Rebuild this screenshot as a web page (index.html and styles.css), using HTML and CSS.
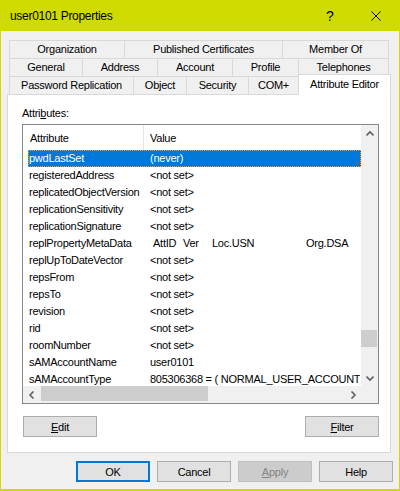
FILE: index.html
```html
<!DOCTYPE html>
<html lang="en">
<head>
  <meta charset="UTF-8">
  <title>user0101 Properties</title>
  <link rel="stylesheet" href="styles.css">
</head>
<body>
  <div class="window">
    <div class="titlebar">
      <span class="title">user0101 Properties</span>
      <span class="cap-btn help">?</span>
      <span class="cap-btn close">
        <svg width="10" height="10" viewBox="0 0 10 10"><path d="M0.5 0.5 L9.5 9.5 M9.5 0.5 L0.5 9.5" stroke="#000" stroke-width="1" fill="none"/></svg>
      </span>
    </div>

    <div class="content">
      <div class="tabs">
        <div class="tab-row">
          <div class="tab" style="width:116px">Organization</div>
          <div class="tab" style="width:159px">Published Certificates</div>
          <div class="tab" style="width:107px">Member Of</div>
        </div>
        <div class="tab-row">
          <div class="tab" style="width:74px">General</div>
          <div class="tab" style="width:76px">Address</div>
          <div class="tab" style="width:76px">Account</div>
          <div class="tab" style="width:67px">Profile</div>
          <div class="tab" style="width:91px">Telephones</div>
        </div>
        <div class="tab-row">
          <div class="tab" style="width:125px">Password Replication</div>
          <div class="tab" style="width:54px">Object</div>
          <div class="tab" style="width:63px">Security</div>
          <div class="tab" style="width:51px">COM+</div>
          <div class="tab active" style="width:93px">Attribute Editor</div>
        </div>
      </div>

      <div class="panel">
        <div class="label">Attri<u>b</u>utes:</div>

        <div class="listbox">
          <div class="list-main">
            <div class="viewport">
              <div class="list-header">
                <div class="col-name">Attribute</div>
                <div class="col-divider"></div>
                <div class="col-value">Value</div>
              </div>
              <div class="row selected"><span class="name">pwdLastSet</span><span class="value">(never)</span></div>
              <div class="row"><span class="name">registeredAddress</span><span class="value">&lt;not set&gt;</span></div>
              <div class="row"><span class="name">replicatedObjectVersion</span><span class="value">&lt;not set&gt;</span></div>
              <div class="row"><span class="name">replicationSensitivity</span><span class="value">&lt;not set&gt;</span></div>
              <div class="row"><span class="name">replicationSignature</span><span class="value">&lt;not set&gt;</span></div>
              <div class="row"><span class="name">replPropertyMetaData</span><span class="value meta"><span class="m1">AttID</span><span class="m2">Ver</span><span class="m3">Loc.USN</span><span>Org.DSA</span></span></div>
              <div class="row"><span class="name">replUpToDateVector</span><span class="value">&lt;not set&gt;</span></div>
              <div class="row"><span class="name">repsFrom</span><span class="value">&lt;not set&gt;</span></div>
              <div class="row"><span class="name">repsTo</span><span class="value">&lt;not set&gt;</span></div>
              <div class="row"><span class="name">revision</span><span class="value">&lt;not set&gt;</span></div>
              <div class="row"><span class="name">rid</span><span class="value">&lt;not set&gt;</span></div>
              <div class="row"><span class="name">roomNumber</span><span class="value">&lt;not set&gt;</span></div>
              <div class="row"><span class="name">sAMAccountName</span><span class="value">user0101</span></div>
              <div class="row"><span class="name">sAMAccountType</span><span class="value">805306368 = ( NORMAL_USER_ACCOUNT )</span></div>
            </div>
            <div class="hscroll">
              <div class="arrow"><svg width="8" height="8" viewBox="0 0 8 8"><path d="M5.5 0.5 L2 4 L5.5 7.5" stroke="#606060" stroke-width="1.6" fill="none"/></svg></div>
              <div class="htrack"><div class="hthumb"></div></div>
              <div class="arrow"><svg width="8" height="8" viewBox="0 0 8 8"><path d="M2.5 0.5 L6 4 L2.5 7.5" stroke="#606060" stroke-width="1.6" fill="none"/></svg></div>
            </div>
          </div>
          <div class="vscroll">
            <div class="arrow"><svg width="8" height="8" viewBox="0 0 8 8"><path d="M0.5 5.5 L4 2 L7.5 5.5" stroke="#606060" stroke-width="1.6" fill="none"/></svg></div>
            <div class="vtrack"><div class="vthumb"></div></div>
            <div class="arrow"><svg width="8" height="8" viewBox="0 0 8 8"><path d="M0.5 2.5 L4 6 L7.5 2.5" stroke="#606060" stroke-width="1.6" fill="none"/></svg></div>
            <div class="corner"></div>
          </div>
        </div>

        <div class="panel-buttons">
          <button class="btn"><u>E</u>dit</button>
          <button class="btn"><u>F</u>ilter</button>
        </div>
      </div>

      <div class="dialog-buttons">
        <button class="btn default">OK</button>
        <button class="btn">Cancel</button>
        <button class="btn disabled"><u>A</u>pply</button>
        <button class="btn">Help</button>
      </div>
    </div>
  </div>
</body>
</html>
```

FILE: styles.css
```css
/* Ventana base */
body {
  margin: 0;
  background-color: #f0f0f0;
  font-family: 'Liberation Sans', Arial, sans-serif;
}
.window {
  width: 400px;
  height: 491px;
  box-sizing: border-box;
  border: 1px solid #cfdb00;
  border-bottom-width: 2px;
  background-color: #f0f0f0;
  overflow: hidden;
}
.titlebar {
  height: 30px;
  background-color: #cfdb00;
  display: flex;
  align-items: center;
  padding-left: 9px;
}
.title {
  font-size: 12px;
  letter-spacing: -0.3px;
  color: #000000;
  flex-grow: 1;
}
.cap-btn {
  width: 46px;
  height: 30px;
  display: flex;
  align-items: center;
  justify-content: center;
}
.help {
  font-size: 14px;
  color: #000000;
}

/* Pestañas */
.content {
  padding-left: 6px;
}
.tabs {
  margin-top: 9px;
  margin-left: 2px;
}
.tab-row {
  display: flex;
  height: 19px;
  margin-bottom: -1px;
}
.tab {
  box-sizing: border-box;
  height: 19px;
  border: 1px solid #d9d9d9;
  margin-left: -1px;
  font-size: 11px;
  letter-spacing: -0.25px;
  line-height: 17px;
  text-align: center;
  color: #000000;
  white-space: nowrap;
}
.tab:first-child {
  margin-left: 0;
}
.tab.active {
  height: 21px;
  margin-top: -2px;
  background-color: #ffffff;
  border-bottom-color: #ffffff;
  position: relative;
  z-index: 1;
  line-height: 18px;
}

/* Panel */
.panel {
  width: 384px;
  height: 359px;
  box-sizing: border-box;
  border: 1px solid #d9d9d9;
  background-color: #ffffff;
  padding-left: 14px;
}
.label {
  margin-top: 12px;
  font-size: 11px;
  letter-spacing: -0.25px;
  line-height: 13px;
  height: 13px;
}
.listbox {
  margin-top: 4px;
  width: 357px;
  height: 280px;
  box-sizing: border-box;
  border: 1px solid #828790;
  display: flex;
}
.list-main {
  width: 338px;
  display: flex;
  flex-direction: column;
}
.viewport {
  height: 261px;
  overflow: hidden;
}
.list-header {
  display: flex;
  height: 25px;
  align-items: center;
  font-size: 11px;
  letter-spacing: -0.25px;
}
.col-name {
  width: 113px;
  padding-left: 7px;
}
.col-divider {
  width: 1px;
  height: 25px;
  background-color: #e5e5e5;
}
.col-value {
  padding-left: 6px;
}
.row {
  display: flex;
  height: 17px;
  box-sizing: border-box;
  margin-left: 5px;
  width: 333px;
  border: 1px solid transparent;
  font-size: 11px;
  letter-spacing: -0.25px;
  line-height: 15px;
  white-space: nowrap;
  overflow: hidden;
}
.row.selected {
  background-color: #0078d7;
  color: #ffffff;
  border: 1px dotted #e89a4a;
}
.name {
  width: 121px;
  flex-shrink: 0;
}
.value.meta {
  padding-left: 3px;
}
.m1 { display: inline-block; width: 30px; }
.m2 { display: inline-block; width: 29px; }
.m3 { display: inline-block; width: 94px; }

/* Barras de desplazamiento */
.arrow {
  width: 17px;
  height: 17px;
  flex-shrink: 0;
  display: flex;
  align-items: center;
  justify-content: center;
}
.hscroll {
  height: 17px;
  display: flex;
  background-color: #f0f0f0;
}
.htrack {
  flex-grow: 1;
}
.hthumb {
  margin-left: 1px;
  width: 167px;
  height: 15px;
  background-color: #cdcdcd;
}
.vscroll {
  width: 17px;
  display: flex;
  flex-direction: column;
  background-color: #f0f0f0;
}
.vtrack {
  flex-grow: 1;
}
.vthumb {
  margin-top: 188px;
  width: 16px;
  height: 17px;
  background-color: #cdcdcd;
}
.corner {
  height: 17px;
}

/* Botones */
.btn {
  box-sizing: border-box;
  width: 74px;
  height: 21px;
  padding: 0;
  background-color: #e1e1e1;
  border: 1px solid #adadad;
  font-family: 'Liberation Sans', Arial, sans-serif;
  font-size: 11px;
  letter-spacing: -0.25px;
  color: #000000;
}
.btn.default {
  border: 2px solid #0078d7;
}
.btn.disabled {
  background-color: #cccccc;
  border-color: #bfbfbf;
  color: #838383;
}
.panel-buttons {
  margin-top: 12px;
  margin-left: 1px;
  width: 356px;
  display: flex;
  justify-content: space-between;
}
.dialog-buttons {
  margin-top: 8px;
  display: flex;
  justify-content: flex-end;
  gap: 7px;
  padding-right: 0;
  width: 386px;
}
```
